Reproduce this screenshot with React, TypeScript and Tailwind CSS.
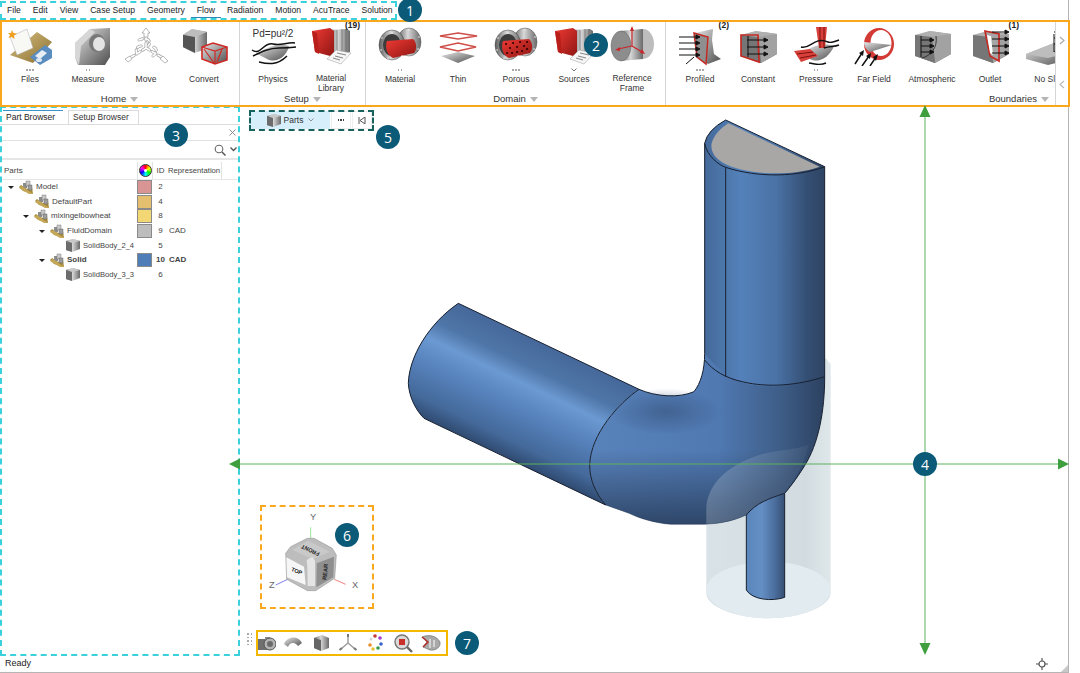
import type { ReactNode } from "react";

const menus = ["File", "Edit", "View", "Case Setup", "Geometry", "Flow", "Radiation", "Motion", "AcuTrace", "Solution"];

const Defs = () => (
  <svg className="absolute w-0 h-0">
    <defs>
      <linearGradient id="steel" x1="0" y1="0" x2="1" y2="1">
        <stop offset="0" stopColor="#e8e8e8" />
        <stop offset=".5" stopColor="#9a9a9a" />
        <stop offset="1" stopColor="#4e4e4e" />
      </linearGradient>
      <linearGradient id="steelH" x1="0" y1="0" x2="1" y2="0">
        <stop offset="0" stopColor="#5c5c5c" />
        <stop offset=".45" stopColor="#d8d8d8" />
        <stop offset="1" stopColor="#6a6a6a" />
      </linearGradient>
      <linearGradient id="red" x1="0" y1="0" x2="1" y2="1">
        <stop offset="0" stopColor="#ef3a34" />
        <stop offset="1" stopColor="#8e1512" />
      </linearGradient>
      <linearGradient id="tan" x1="0" y1="0" x2="1" y2="1">
        <stop offset="0" stopColor="#d7c084" />
        <stop offset="1" stopColor="#8a6e2c" />
      </linearGradient>
      <linearGradient id="vtube" x1="917" y1="0" x2="1277" y2="0" gradientUnits="userSpaceOnUse">
        <stop offset="0" stopColor="#45699b" />
        <stop offset=".16" stopColor="#4c76aa" />
        <stop offset=".3" stopColor="#5481ba" />
        <stop offset=".6" stopColor="#4a72a5" />
        <stop offset=".85" stopColor="#344f74" />
        <stop offset="1" stopColor="#2f4463" />
      </linearGradient>
      <linearGradient id="htube" x1="300" y1="640" x2="147" y2="960" gradientUnits="userSpaceOnUse">
        <stop offset="0" stopColor="#46689a" />
        <stop offset=".22" stopColor="#4f76a8" />
        <stop offset=".37" stopColor="#6b99d1" />
        <stop offset=".6" stopColor="#5580b9" />
        <stop offset=".85" stopColor="#44699a" />
        <stop offset="1" stopColor="#2f4a70" />
      </linearGradient>
      <linearGradient id="elbow" x1="570" y1="0" x2="1277" y2="0" gradientUnits="userSpaceOnUse">
        <stop offset="0" stopColor="#5882ba" />
        <stop offset=".55" stopColor="#5079b2" />
        <stop offset=".8" stopColor="#3f5f8a" />
        <stop offset="1" stopColor="#2c4160" />
      </linearGradient>
      <linearGradient id="elbowBottom" x1="0" y1="1020" x2="0" y2="1243" gradientUnits="userSpaceOnUse">
        <stop offset="0" stopColor="#22344f" stopOpacity="0" />
        <stop offset="1" stopColor="#22344f" stopOpacity=".75" />
      </linearGradient>
      <radialGradient id="crease">
        <stop offset="0" stopColor="#38557f" stopOpacity=".65" />
        <stop offset="1" stopColor="#38557f" stopOpacity="0" />
      </radialGradient>
      <linearGradient id="pipe" x1="1042" y1="0" x2="1157" y2="0" gradientUnits="userSpaceOnUse">
        <stop offset="0" stopColor="#5a86bb" />
        <stop offset=".4" stopColor="#648fc4" />
        <stop offset=".75" stopColor="#4a6d9c" />
        <stop offset="1" stopColor="#364f73" />
      </linearGradient>
      <linearGradient id="glass" x1="922" y1="0" x2="1295" y2="0" gradientUnits="userSpaceOnUse">
        <stop offset="0" stopColor="#d9e2e6" />
        <stop offset=".8" stopColor="#d2dce0" />
        <stop offset="1" stopColor="#dfe7ea" />
      </linearGradient>
      <linearGradient id="glassFront" x1="922" y1="0" x2="1225" y2="0" gradientUnits="userSpaceOnUse">
        <stop offset="0" stopColor="#c6d2da" stopOpacity=".28" />
        <stop offset="1" stopColor="#c6d2da" stopOpacity=".06" />
      </linearGradient>
    </defs>
  </svg>
);

const Icon = ({ children }: { children: ReactNode }) => (
  <svg width="48" height="40" viewBox="0 0 48 40" className="shrink-0">
    {children}
  </svg>
);

const Book = () => (
  <>
    <path d="M21 4 L40 3 L43 5 L43 26 L24 30Z" fill="url(#steelH)" />
    <path d="M30 4V27M35 3V27M39 3V26" stroke="#666" strokeWidth=".7" />
    <path d="M5 5 L23 2 L27 5 L27 31 L8 26Z" fill="url(#red)" />
    <path d="M5 5 L10 7 L12 28 L8 26Z" fill="#b81e1a" />
    <path d="M29 24 L44 27 L34 38 L20 33Z" fill="#f6f6f6" stroke="#999" strokeWidth=".5" />
    <path d="M30 27L39 29M28 30L36 32M26 32L33 34" stroke="#555" strokeWidth=".7" />
  </>
);

const Flange = ({ porous }: { porous?: boolean }) => (
  <>
    <ellipse cx="33" cy="16" rx="12" ry="14" fill="url(#steelH)" stroke="#555" strokeWidth=".5" />
    <ellipse cx="16" cy="19" rx="13" ry="15" fill="url(#steelH)" stroke="#444" strokeWidth=".5" />
    <ellipse cx="16" cy="19" rx="9" ry="11" fill="#3c3c3c" />
    <path d="M11 15 L37 13 C41 16 41 24 38 27 L17 32 C10 29 9 20 11 15Z" fill="url(#red)" />
    <path d="M16 7h.1M6 12h.1M5 24h.1M12 32h.1M26 30h.1M42 23h.1M43 11h.1M33 4h.1" stroke="#eee" strokeWidth="1.5" strokeLinecap="round" />
    {porous && (
      <path
        d="M14 18h.1M18 22h.1M21 17h.1M25 21h.1M28 16h.1M32 20h.1M35 16h.1M15 27h.1M20 27h.1M25 26h.1M30 25h.1M35 23h.1"
        stroke="#300"
        strokeWidth="2"
        strokeLinecap="round"
      />
    )}
  </>
);

const Arrows = ({ x, ys, len }: { x: number; ys: number[]; len: number }) => (
  <g stroke="#111" strokeWidth="1" fill="#111">
    {ys.map((y) => (
      <g key={y}>
        <path d={`M${x} ${y}h${len}`} />
        <path d={`M${x + len + 3} ${y}l-4 -2v4z`} />
      </g>
    ))}
  </g>
);

const Box = () => (
  <>
    <path d="M7 9 L22 5 L43 8 L43 28 L27 37 L7 30Z" fill="url(#steel)" />
    <path d="M24 9 L43 8 L43 28 L27 37Z" fill="#a2a2a2" />
    <path d="M7 9 L24 9 L27 37 L7 30Z" fill="#767676" />
    <path d="M7 9 L22 5 L43 8 L24 11Z" fill="#b0b0b0" />
  </>
);

const icons: Record<string, ReactNode> = {
  Files: (
    <Icon>
      <path d="M4 29 L31 6 L46 16 L27 37Z" fill="url(#tan)" />
      <path d="M4 11 L21 3 L27 22 L11 29Z" fill="#f8f8f4" stroke="#aaa" strokeWidth=".5" />
      <path d="M6 4 L7.5 7 L11 7.5 L8 9.5 L8.5 13 L5.5 11 L2.5 12 L4 9 L2 7 L5 7Z" fill="#f0a020" />
      <path d="M24 31 L39 19 L46 24 L46 32 L34 39Z" fill="#5a8cc0" />
      <path d="M29 30 L36 24 L41 27 L34 33Z" fill="#e9eef4" />
      <ellipse cx="33" cy="34" rx="3" ry="2" fill="#dfe7f0" />
    </Icon>
  ),
  Measure: (
    <Icon>
      <path d="M11 17 L26 3 L46 2 L46 31 L41 39 L14 39 L11 31Z" fill="url(#steel)" />
      <path d="M11 17 L26 3 L31 6 L17 20 L15 39 L11 31Z" fill="#d7d7d7" />
      <ellipse cx="33" cy="17" rx="8" ry="9" fill="#777" />
      <ellipse cx="35" cy="18" rx="6" ry="7" fill="#e4e4e4" />
    </Icon>
  ),
  Move: (
    <Icon>
      <g fill="none" stroke="#a5a5a5" strokeWidth="3" strokeLinecap="round" strokeDasharray="4 3">
        <path d="M24 10V22M24 22L8 32M24 22L41 32M17 14C26 10 30 16 26 20M15 28C12 22 18 18 22 21M31 30C37 26 34 20 29 21" />
      </g>
      <g fill="none" stroke="#fff" strokeWidth="1.6" strokeLinecap="round" strokeDasharray="4 3">
        <path d="M24 10V22M24 22L8 32M24 22L41 32M17 14C26 10 30 16 26 20M15 28C12 22 18 18 22 21M31 30C37 26 34 20 29 21" />
      </g>
      <path d="M24 2 L28 7 L26 7 L26 11 L22 11 L22 7 L20 7Z" fill="#fff" stroke="#999" strokeWidth=".7" />
      <path d="M3 33 L8 30 L10 33 L6 36Z" fill="#fff" stroke="#999" strokeWidth=".7" />
      <path d="M46 35 L41 30 L38 33 L43 37Z" fill="#fff" stroke="#999" strokeWidth=".7" />
    </Icon>
  ),
  Convert: (
    <Icon>
      <path d="M3 9 L12 3 L27 6 L27 23 L14 27 L3 21Z" fill="url(#steelH)" />
      <path d="M3 9 L12 3 L27 6 L15 11Z" fill="#bdbdbd" />
      <path d="M3 9 L15 11 L15 27 L3 21Z" fill="#555" />
      <path d="M22 21 L33 17 L47 21 L47 34 L35 38 L22 33Z" fill="url(#steel)" stroke="#d02a26" strokeWidth="1.6" />
      <path d="M22 21 L35 25 L47 21M35 25V38M24 23L34 37M42 23L37 36" fill="none" stroke="#d02a26" strokeWidth="1.2" />
    </Icon>
  ),
  Physics: (
    <Icon>
      <text x="24" y="11" textAnchor="middle" fontSize="10" fill="#333" fontFamily="Liberation Sans, sans-serif">
        Pd=pu²/2
      </text>
      <path d="M8 28 C18 22 26 17 40 20 C38 30 28 38 18 33 C14 31 11 29 8 28Z" fill="url(#steel)" />
      <g fill="none" stroke="#111" strokeWidth="1.5">
        <path d="M3 24 C12 30 14 16 24 18 C32 20 38 16 46 17" />
        <path d="M4 30 C12 26 20 22 30 22 C36 22 40 22 47 21" />
        <path d="M10 36 C18 38 28 40 38 30" />
      </g>
    </Icon>
  ),
  "Material Library": <Icon><Book /></Icon>,
  Material: <Icon><Flange /></Icon>,
  Thin: (
    <Icon>
      <path d="M24 7 L43 10 L24 13 L6 10Z" fill="#fff" stroke="#d0504a" strokeWidth="1.6" />
      <path d="M24 17 L42 21 L24 25 L6 21Z" fill="#fff" stroke="#d0504a" strokeWidth="1.6" />
      <path d="M24 26 L41 30 L24 37 L7 30Z" fill="url(#steel)" />
    </Icon>
  ),
  Porous: <Icon><Flange porous /></Icon>,
  Sources: <Icon><Book /></Icon>,
  "Reference Frame": (
    <Icon>
      <ellipse cx="35" cy="18" rx="11" ry="15" fill="#bdbdbd" />
      <path d="M12 5 L35 3 L35 33 L12 35Z" fill="url(#steelH)" />
      <ellipse cx="13" cy="20" rx="10" ry="15" fill="#8d8d8d" stroke="#666" strokeWidth=".5" />
      <path d="M24 2V20M24 20L10 23M24 20L34 26" stroke="#c9262a" strokeWidth="1.2" fill="none" />
      <path d="M24 0 L26 5 L22 5Z M7 24 L12 21 L12 25Z M37 28 L32 27 L34 23Z" fill="#c9262a" />
    </Icon>
  ),
  Profiled: (
    <Icon>
      <path d="M19 7 L37 3 L36 14 L38 28 L45 33 L32 38 L22 31Z" fill="url(#steel)" />
      <path d="M18 7 L32 11 L30 38 L21 31Z" fill="#8f8f8f" stroke="#c32a24" strokeWidth="1.5" />
      <Arrows x={3} ys={[11, 17, 23, 29]} len={18} />
      <path d="M10 38L18 31" stroke="#111" />
    </Icon>
  ),
  Constant: (
    <Icon>
      <Box />
      <path d="M7 9 L24 9 L25 36 L7 30Z" fill="none" stroke="#c32a24" strokeWidth="1.7" />
      <Arrows x={13} ys={[14, 21, 28]} len={18} />
      <path d="M14 10V31" stroke="#111" />
    </Icon>
  ),
  Pressure: (
    <Icon>
      <path d="M13 25 C24 18 34 17 42 20 C38 30 28 38 18 33Z" fill="url(#steel)" />
      <path d="M24 1H35L33 22H27Z" fill="#d8413b" />
      <path d="M28 1V22M32 1V22" stroke="#7c100d" />
      <path d="M2 25 L18 23 L26 30 L9 36Z" fill="#d8413b" />
      <path d="M5 28L21 26M8 32L24 29" stroke="#7c100d" />
      <g fill="none" stroke="#111" strokeWidth="1.4">
        <path d="M9 21 C18 24 22 10 36 16 C38 17 42 16 47 14" />
        <path d="M32 22C38 20 42 21 47 19" />
        <path d="M17 37 C24 38 28 40 34 37" />
      </g>
    </Icon>
  ),
  "Far Field": (
    <Icon>
      <ellipse cx="29" cy="18" rx="15" ry="16" fill="#d43a35" />
      <ellipse cx="31" cy="17" rx="10.500" ry="13" fill="#fff" />
      <path d="M14 16 L42 19 L20 26 C16 24 14 20 14 16Z" fill="url(#steel)" />
      <path d="M5 38L12 27M12 40L19 30M20 40L26 31" stroke="#111" strokeWidth="1.5" />
      <path d="M14 24L9 27L13 30ZM21 27L16 30L20 33ZM28 28L23 31L26 35Z" fill="#111" />
    </Icon>
  ),
  Atmospheric: (
    <Icon>
      <Box />
      <path d="M28 10 C30 22 22 30 14 32" stroke="#222" fill="none" strokeWidth=".8" />
      <Arrows x={13} ys={[14, 20, 26]} len={10} />
      <path d="M13 10V31" stroke="#111" />
    </Icon>
  ),
  Outlet: (
    <Icon>
      <Box />
      <path d="M19 5 L33 8 L33 35 L24 30Z" fill="#a5a5a5" stroke="#c32a24" strokeWidth="1.7" />
      <path d="M21 9L25 10L27 29L24 27Z" fill="#fff" />
      <Arrows x={26} ys={[6, 13, 20, 27]} len={14} />
    </Icon>
  ),
  "No Slip": (
    <Icon>
      <path d="M2 28 L30 17 L48 26 L48 33 L24 39 L2 33Z" fill="url(#steel)" />
      <path d="M2 28 L30 17 L48 26 L24 32Z" fill="#bdbdbd" />
      <path d="M30 8V26C30 26 38 20 38 6" fill="none" stroke="#111" />
      <Arrows x={30} ys={[6, 12, 18]} len={12} />
    </Icon>
  ),
};

type ItemProps = { label: string; lines?: string[]; dots?: number; chevron?: boolean; count?: string };

const RibbonItem = ({ label, lines, dots = 0, chevron, count }: ItemProps) => (
  <div className="relative w-[58px] shrink-0 flex flex-col items-center text-center">
    {count && (
      <span className="absolute -top-[5px] right-0 text-[8.5px] font-bold leading-none text-[#222]">{count}</span>
    )}
    <div className="h-[41px] flex items-start justify-center">{icons[label]}</div>
    <div className="h-[6px] flex items-center justify-center gap-[1.5px]">
      {Array.from({ length: dots }).map((_, i) => (
        <span key={i} className="w-[1.5px] h-[1.5px] bg-[#aaa]" />
      ))}
      {chevron && (
        <svg width="6" height="4" viewBox="0 0 6 4">
          <path d="M.5 .5L3 3L5.5 .5" fill="none" stroke="#555" strokeWidth=".8" />
        </svg>
      )}
    </div>
    <div className="mt-[1px] w-[58px] text-[8.5px] leading-[10px] text-[#333] whitespace-nowrap">
      {(lines ?? [label]).map((l) => (
        <div key={l}>{l}</div>
      ))}
    </div>
  </div>
);

const Caret = () => (
  <svg width="8" height="5" viewBox="0 0 8 5" className="ml-[4px]">
    <path d="M0 0H8L4 5Z" fill="#b5b5b5" />
  </svg>
);

const RibbonGroup = ({
  name,
  width,
  right,
  children,
}: {
  name: string;
  width: string;
  right?: boolean;
  children: ReactNode;
}) => (
  <div className={`${width} shrink-0 h-[86px] pt-[6px] flex flex-col border-r border-[#d6d6d6] overflow-hidden`}>
    <div className="flex h-[67px] pl-[1px]">{children}</div>
    <div className={`h-[13px] flex items-center text-[9.5px] text-[#333] ${right ? "justify-end pr-[6px]" : "justify-center"}`}>
      {name}
      <Caret />
    </div>
  </div>
);

const FolderIcon = () => (
  <svg width="16" height="15" viewBox="0 0 16 15" className="shrink-0">
    <path d="M1 7 L5 11 L15 14 L14 7 L9 9 L3 5Z" fill="#a88c3e" />
    <rect x="5" y="3" width="4" height="5" fill="#8d8d8d" />
    <rect x="8" y="1" width="4" height="5" fill="#c9c9c9" stroke="#666" strokeWidth=".4" />
    <rect x="10" y="5" width="4" height="5" fill="#9d9d9d" stroke="#555" strokeWidth=".4" />
    <path d="M1 8 L11 14 L15 14 L4 6Z" fill="#c4a858" />
  </svg>
);

const CubeIcon = () => (
  <svg width="16" height="15" viewBox="0 0 16 15" className="shrink-0">
    <path d="M1 3 L8 1 L15 3 L15 11 L7 14 L1 12Z" fill="url(#steelH)" />
    <path d="M1 3 L8 1 L15 3 L7 5Z" fill="#c8c8c8" />
    <path d="M1 3 L7 5 L7 14 L1 12Z" fill="#6c6c6c" />
  </svg>
);

type Row = { name: string; indent: number; tri?: boolean; cube?: boolean; color?: string; id: string; rep?: string; bold?: boolean };

const rows: Row[] = [
  { name: "Model", indent: 0, tri: true, color: "#d99494", id: "2" },
  { name: "DefaultPart", indent: 1, color: "#e3bf6f", id: "4" },
  { name: "mixingelbowheat", indent: 1, tri: true, color: "#f4d775", id: "8" },
  { name: "FluidDomain", indent: 2, tri: true, color: "#bdbdbd", id: "9", rep: "CAD" },
  { name: "SolidBody_2_4", indent: 3, cube: true, id: "5" },
  { name: "Solid", indent: 2, tri: true, color: "#4e7db8", id: "10", rep: "CAD", bold: true },
  { name: "SolidBody_3_3", indent: 3, cube: true, id: "6" },
];

const indents = ["pl-[19px]", "pl-[34px]", "pl-[50px]", "pl-[65px]"];

const PartRow = ({ row }: { row: Row }) => (
  <div className={`h-[14.6px] flex items-center text-[8px] text-[#444] ${row.bold ? "font-bold text-[#222]" : ""}`}>
    <div className={`relative w-[137px] shrink-0 flex items-center gap-[2px] whitespace-nowrap ${indents[row.indent]}`}>
      {row.tri && <span className="-ml-[11px] mr-[2px] w-0 h-0 border-x-[3px] border-x-transparent border-t-[3px] border-t-[#222]" />}
      {row.cube ? <CubeIcon /> : <FolderIcon />}
      <span className={row.cube ? "text-[7.6px]" : ""}>{row.name}</span>
    </div>
    <div className="w-[16px] shrink-0">
      {row.color && <div className="w-[15px] h-[14px] border border-[#8a8a8a]" style={{ background: row.color }} />}
    </div>
    <div className="w-[15px] shrink-0 text-center">{row.id}</div>
    <div className="pl-[1px]">{row.rep}</div>
  </div>
);

const PartBrowser = () => (
  <aside className="w-[240px] shrink-0 flex flex-col bg-white">
    <div className="h-[19px] pl-[3px] flex items-end border-b border-[#dcdcdc] text-[8.5px]">
      <div className="h-[14px] w-[60px] flex items-center pl-[3px] border-t border-t-[#3b93c8] text-[#222]">Part Browser</div>
      <div className="ml-[5px] h-[14px] w-[71px] flex items-center pl-[4px] border-t border-r border-l border-[#dcdcdc] text-[#333]">
        Setup Browser
      </div>
    </div>
    <div className="h-[16px] flex items-center justify-end pr-[4px] border-b border-[#e2e2e2]">
      <svg width="7" height="7" viewBox="0 0 7 7">
        <path d="M.5 .5L6.5 6.5M6.5 .5L.5 6.5" stroke="#8a8a8a" />
      </svg>
    </div>
    <div className="h-[19px] flex items-center justify-end gap-[4px] pr-[3px] border-b-2 border-[#e6e6e6]">
      <svg width="12" height="12" viewBox="0 0 12 12">
        <circle cx="5" cy="5" r="3.8" fill="none" stroke="#666" strokeWidth="1.1" />
        <path d="M8 8L11.5 11.5" stroke="#555" strokeWidth="1.5" />
      </svg>
      <svg width="7" height="5" viewBox="0 0 7 5">
        <path d="M.5 .5L3.5 3.5L6.5 .5" fill="none" stroke="#555" strokeWidth="1.4" />
      </svg>
    </div>
    <div className="mt-[2px] h-[18px] flex items-center text-[8px] text-[#444] border-b border-[#e6e6e6]">
      <div className="w-[137px] pl-[4px] shrink-0">Parts</div>
      <div className="w-[16px] h-full flex items-center justify-center border-x border-[#e2e2e2] shrink-0">
        <span className="w-[13px] h-[13px] rounded-full border border-[#333] bg-[conic-gradient(red,yellow,lime,aqua,blue,magenta,red)] flex items-center justify-center">
          <span className="w-[3px] h-[3px] rounded-full bg-white" />
        </span>
      </div>
      <div className="w-[15px] text-center shrink-0">ID</div>
      <div className="pr-[1px] h-full flex items-center border-r border-[#e2e2e2] text-[7.7px]">Representation</div>
    </div>
    <div>
      {rows.map((r) => (
        <PartRow key={r.name} row={r} />
      ))}
    </div>
  </aside>
);

const Model = () => (
  <svg viewBox="0 0 1380 1530" className="absolute left-[159px] top-[4px] w-[460px] h-[510px]">
    <path
      d="M1280 745 L1295 762 L1295 1450 C1295 1490 1200 1525 1110 1525 C1010 1525 922 1490 922 1450 L922 1190 L1100 800Z"
      fill="url(#glass)"
    />
    <ellipse cx="1108" cy="1440" rx="186" ry="85" fill="#e1ebf0" />
    {/* elbow */}
    <path
      d="M917 730 C917 780 905 820 885 845 C840 865 770 860 720 838 C660 880 575 970 572 1065 C572 1110 590 1150 620 1185 L690 1210 C720 1225 770 1240 815 1243 L900 1243 C950 1243 1000 1235 1042 1215 C1070 1180 1110 1165 1157 1150 C1170 1135 1190 1110 1215 1070 C1260 1000 1277 900 1277 800Z"
      fill="url(#elbow)"
    />
    <path
      d="M572 1065 C572 1110 590 1150 620 1185 L690 1210 C720 1225 770 1240 815 1243 L900 1243 C950 1243 1000 1235 1042 1215 C1070 1180 1110 1165 1157 1150 C1170 1135 1190 1110 1215 1070 L1240 1020 L580 1020Z"
      fill="url(#elbowBottom)"
    />
    <ellipse cx="800" cy="905" rx="170" ry="70" fill="url(#crease)" />
    {/* inlet */}
    <path
      d="M178 580 L720 838 C660 880 575 970 572 1065 C572 1110 590 1150 620 1185 L75 925 C50 900 30 860 28 820 C30 740 90 640 178 580Z"
      fill="url(#htube)"
    />
    {/* riser */}
    <path
      d="M917 100 Q925 60 980 30 L1277 170 L1277 800 C1200 825 1130 832 1090 828 C1040 825 980 810 917 730Z"
      fill="url(#vtube)"
    />
    <path
      d="M988 40 L1262 170 C1220 185 1170 190 1130 190 C1060 190 990 175 960 150 C940 135 935 115 938 100 C945 75 965 55 988 40Z"
      fill="#a8a7a5"
    />
    {/* see-through cylinder lying over the bend */}
    <path
      d="M922 1243 L922 1190 C930 1120 980 1070 1080 1035 C1130 1020 1180 1022 1228 1005 C1215 1070 1180 1120 1157 1150 C1110 1165 1070 1180 1042 1215 C1000 1235 960 1240 922 1243Z"
      fill="url(#glassFront)"
    />
    {/* small pipe */}
    <path
      d="M1042 1215 C1070 1180 1110 1165 1157 1150 L1157 1462 C1120 1475 1060 1470 1042 1440Z"
      fill="url(#pipe)"
    />
    <g fill="none" stroke="#172030" strokeWidth="3">
      <path d="M917 100 Q925 60 980 30 L1277 170 L1277 800 C1277 900 1260 1000 1215 1070 C1190 1110 1170 1135 1157 1150 L1157 1462 C1120 1475 1060 1470 1042 1440 L1042 1215" />
      <path d="M917 100 L917 730 C917 780 905 820 885 845 C840 865 770 860 720 838 L178 580 C90 640 30 740 28 820 C30 860 50 900 75 925 L620 1185" />
      <path d="M917 100 C925 140 960 165 980 172 C1080 205 1200 200 1277 170" />
      <path d="M980 172 L980 800" />
      <path d="M917 750 C940 780 980 805 1030 815 C1110 835 1200 825 1277 800" />
      <path d="M720 838 C660 880 575 970 572 1065 C572 1110 590 1150 620 1185" />
      <path d="M1042 1215 C1070 1180 1110 1165 1157 1150" />
    </g>
    <path d="M620 1185 L690 1210 C720 1225 770 1240 815 1243 L900 1243 C950 1243 1000 1235 1042 1215" fill="none" stroke="#1d2a3e" strokeWidth="2" opacity=".5" />
  </svg>
);

const ViewCube = () => (
  <svg viewBox="0 0 750 519" className="absolute left-[-1px] top-[394px] w-[250px] h-[173px]">
    <g fontFamily="Liberation Sans, sans-serif" fontSize="28" fill="#666">
      <text x="213" y="60">Y</text>
      <text x="90" y="263">Z</text>
      <text x="339" y="263">X</text>
    </g>
    <path d="M215 82V116" stroke="#9be39b" strokeWidth="3" />
    <path d="M110 255L146 238" stroke="#7f7fe8" strokeWidth="3" />
    <path d="M320 253L286 238" stroke="#f07f7f" strokeWidth="3" />
    <path d="M140 160 L155 140 L205 115 L225 115 L280 145 L292 165 L287 235 L230 272 L205 272 L143 238Z" fill="#bdbdbd" stroke="#8a8a8a" strokeWidth="1.5" />
    <path d="M160 150 L207 122 L272 155 L222 178Z" fill="#c9c9c9" />
    <path d="M142 172 L195 200 L200 255 L144 232Z" fill="#f6f6f6" />
    <path d="M233 190 L285 170 L283 232 L232 262Z" fill="#8f8f8f" />
    <path d="M205 200 L203 180 L220 170 L228 182 L228 258 L206 258Z" fill="#e4e4e4" />
    <g fontFamily="Liberation Sans, sans-serif" fontSize="17" fontWeight="700" fill="#222">
      <text transform="translate(155 212) rotate(22)">TOP</text>
      <text transform="translate(262 240) rotate(-84)">REAR</text>
      <text transform="translate(243 158) rotate(205)">FRONT</text>
    </g>
  </svg>
);

const tools: ReactNode[] = [
  <>
    <rect x="1" y="6" width="11" height="11" fill="#6f6f6f" />
    <rect x="9" y="4" width="5" height="5" fill="#8b8b8b" />
    <circle cx="14" cy="11" r="6" fill="#b3b3b3" stroke="#555" />
    <circle cx="14" cy="11" r="3" fill="#6a6a6a" />
  </>,
  <path d="M1 11 C4 3 15 2 19 10 L15 13 C12 9 7 9 5 14Z" fill="url(#steel)" />,
  <>
    <path d="M3 5 L11 2 L18 5 L18 15 L10 18 L3 15Z" fill="url(#steelH)" />
    <path d="M3 5 L10 7 L10 18 L3 15Z" fill="#666" />
  </>,
  <>
    <path d="M10 3V10M10 10L3 16M10 10L17 16" stroke="#9a9a9a" strokeWidth="1.4" />
    <path d="M10 1V4M1.5 17L4 15M18.500 17L16 15" stroke="#777" strokeWidth="2" />
  </>,
  <>
    <circle cx="9" cy="3" r="1.8" fill="#c43838" />
    <circle cx="14" cy="5" r="1.8" fill="#a63ad0" />
    <circle cx="15" cy="11" r="1.8" fill="#3a62d0" />
    <circle cx="12" cy="15" r="1.8" fill="#2f9d4a" />
    <circle cx="7" cy="16" r="1.8" fill="#e3c32f" />
    <circle cx="4" cy="12" r="1.8" fill="#e89028" />
    <circle cx="5" cy="6" r="1.5" fill="#d8d8d8" />
  </>,
  <>
    <circle cx="9" cy="9" r="7" fill="#d9d9d9" stroke="#777" strokeWidth="1.4" />
    <rect x="6" y="6" width="6" height="6" fill="#c9302c" />
    <path d="M14 14L19 19" stroke="#666" strokeWidth="2.4" />
  </>,
  <>
    <path d="M1 4 C8 1 16 3 19 9 C20 14 15 18 9 17 L2 14 L6 9Z" fill="#a9a9a9" stroke="#666" strokeWidth=".6" />
    <path d="M1 4L7 9L2 14" fill="none" stroke="#b0302c" strokeWidth="1.5" />
    <path d="M9 6V15M13 7V14" stroke="#fff" strokeWidth="1" />
  </>,
];

const Viewport = () => (
  <main className="relative flex-1 bg-white overflow-hidden">
    <div className="absolute left-[10px] top-[5px] flex h-[18px] text-[8.5px] text-[#333]">
      <div className="w-[80px] flex items-center justify-center gap-[2px] bg-[#d6effa]">
        <CubeIcon />
        Parts
        <svg width="6" height="4" viewBox="0 0 6 4" className="ml-[3px]">
          <path d="M.5 .5L3 3L5.500 .5" fill="none" stroke="#777" strokeWidth=".8" />
        </svg>
      </div>
      <div className="ml-[1px] w-[20px] flex items-center justify-center gap-[1px] border border-[#eee]">
        <span className="w-[1.5px] h-[1.5px] bg-[#444]" />
        <span className="w-[1.5px] h-[1.5px] bg-[#444]" />
        <span className="w-[1.5px] h-[1.5px] bg-[#444]" />
      </div>
      <div className="ml-[1px] w-[20px] flex items-center justify-center border border-[#eee]">
        <svg width="8" height="7" viewBox="0 0 8 7">
          <path d="M1 0V7" stroke="#555" />
          <path d="M7 0V7L2 3.500Z" fill="none" stroke="#555" />
        </svg>
      </div>
    </div>
    <Model />
    <ViewCube />
    <div className="absolute left-[7px] top-[527px] grid grid-cols-2 gap-[2px]">
      {Array.from({ length: 8 }).map((_, i) => (
        <span key={i} className="w-[1.5px] h-[1.5px] bg-[#aaa]" />
      ))}
    </div>
    <div className="absolute left-[12px] top-[527px] flex">
      {tools.map((t, i) => (
        <div key={i} className="w-[27.5px] h-[20px] flex items-center justify-center">
          <svg width="20" height="20" viewBox="0 0 20 20">
            {t}
          </svg>
        </div>
      ))}
    </div>
  </main>
);

const Badge = ({ n, pos }: { n: number; pos: string }) => (
  <div
    className={`absolute ${pos} w-[24px] h-[24px] rounded-full bg-[#0b5a78] text-white text-[14px] flex items-center justify-center font-['Open_Sans',sans-serif]`}
  >
    {n}
  </div>
);

const Annotations = () => (
  <>
    <div className="absolute left-0 top-[1px] w-[397px] h-[19px] border-2 border-dashed border-[#3ad0dc]" />
    <div className="absolute left-0 top-[106px] w-[240px] h-[550px] border-2 border-dashed border-[#3ad0dc]" />
    <div className="absolute left-0 top-[20px] w-[1070px] h-[87px] border-2 border-[#f9a81e]" />
    <div className="absolute left-[249px] top-[110px] w-[125px] h-[21px] border-2 border-dashed border-[#17625e]" />
    <div className="absolute left-[260px] top-[505px] w-[114px] h-[104px] border-2 border-dashed border-[#f9a81e]" />
    <div className="absolute left-[256px] top-[630px] w-[192px] h-[26px] border-2 border-[#f5b800]" />
    <svg className="absolute left-0 top-0 w-[1080px] h-[673px] pointer-events-none" viewBox="0 0 1080 673">
      <g stroke="#5cb05c" strokeWidth="1">
        <path d="M234 464H1064" />
        <path d="M925 110V650" />
      </g>
      <g fill="#3f9f3f">
        <path d="M229 464l11 -5.500v11z" />
        <path d="M1069 464l-11 -5.500v11z" />
        <path d="M925 105l-5.500 12h11z" />
        <path d="M925 655l-5.500 -12h11z" />
      </g>
    </svg>
    <Badge n={1} pos="left-[398px] top-[-2px]" />
    <Badge n={2} pos="left-[584px] top-[33px]" />
    <Badge n={3} pos="left-[164px] top-[123px]" />
    <Badge n={4} pos="left-[913px] top-[452px]" />
    <Badge n={5} pos="left-[376px] top-[125px]" />
    <Badge n={6} pos="left-[335px] top-[523px]" />
    <Badge n={7} pos="left-[455px] top-[631px]" />
  </>
);

const App = () => (
  <div className="relative w-[1080px] h-[673px] bg-white overflow-hidden font-['Liberation_Sans',Arial,sans-serif]">
    <Defs />
    <div className="w-[1069px] h-full flex flex-col border-r border-[#b5b5b5]">
      <nav className="h-[20px] shrink-0 flex items-center pl-[1px] text-[8.6px] text-[#222]">
        {menus.map((m) => (
          <span key={m} className="relative px-[6px] leading-[20px]">
            {m}
            {m === "Flow" && <span className="absolute left-0 right-0 bottom-[2px] h-[1px] bg-[#2f86b8]" />}
          </span>
        ))}
      </nav>
      <section className="h-[86px] shrink-0 flex">
        <RibbonGroup name="Home" width="w-[240px]">
          <RibbonItem label="Files" dots={3} />
          <RibbonItem label="Measure" dots={2} />
          <RibbonItem label="Move" />
          <RibbonItem label="Convert" />
        </RibbonGroup>
        <RibbonGroup name="Setup" width="w-[126px]">
          <div className="w-[3px] shrink-0" />
          <RibbonItem label="Physics" />
          <RibbonItem label="Material Library" lines={["Material", "Library"]} count="(19)" />
        </RibbonGroup>
        <RibbonGroup name="Domain" width="w-[300px]">
          <div className="w-[4px] shrink-0" />
          <RibbonItem label="Material" dots={2} />
          <RibbonItem label="Thin" />
          <RibbonItem label="Porous" dots={3} />
          <RibbonItem label="Sources" chevron />
          <RibbonItem label="Reference Frame" lines={["Reference", "Frame"]} />
        </RibbonGroup>
        <RibbonGroup name="Boundaries" width="w-[390px]" right>
          <div className="w-[4px] shrink-0" />
          <RibbonItem label="Profiled" dots={3} count="(2)" />
          <RibbonItem label="Constant" />
          <RibbonItem label="Pressure" dots={2} />
          <RibbonItem label="Far Field" />
          <RibbonItem label="Atmospheric" />
          <RibbonItem label="Outlet" count="(1)" />
          <RibbonItem label="No Slip" />
        </RibbonGroup>
        <div className="flex-1 flex flex-col items-center pt-[16px] gap-[35px]">
          <svg width="6" height="9" viewBox="0 0 6 9">
            <path d="M1 1L5 4.500L1 8" fill="none" stroke="#aaa" strokeWidth="1.2" />
          </svg>
          <svg width="6" height="9" viewBox="0 0 6 9">
            <path d="M5 1L1 4.500L5 8" fill="none" stroke="#bbb" strokeWidth="1.2" />
          </svg>
        </div>
      </section>
      <div className="flex-1 flex min-h-0">
        <PartBrowser />
        <Viewport />
      </div>
      <footer className="h-[17px] shrink-0 relative flex items-center pl-[5px] text-[9px] text-[#222] border-b border-[#b5b5b5]">
        Ready
        <svg width="12" height="12" viewBox="0 0 12 12" className="absolute left-[1036px] top-[2px]">
          <circle cx="6" cy="6" r="3" fill="none" stroke="#555" strokeWidth="1.2" />
          <path d="M6 0V3M6 9V12M0 6H3M9 6H12" stroke="#555" strokeWidth="1.2" />
        </svg>
        <span className="absolute right-0 bottom-0 w-0 h-0 border-l-[7px] border-l-transparent border-b-[7px] border-b-[#c8c8c8]" />
      </footer>
    </div>
    <Annotations />
  </div>
);

export default App;
